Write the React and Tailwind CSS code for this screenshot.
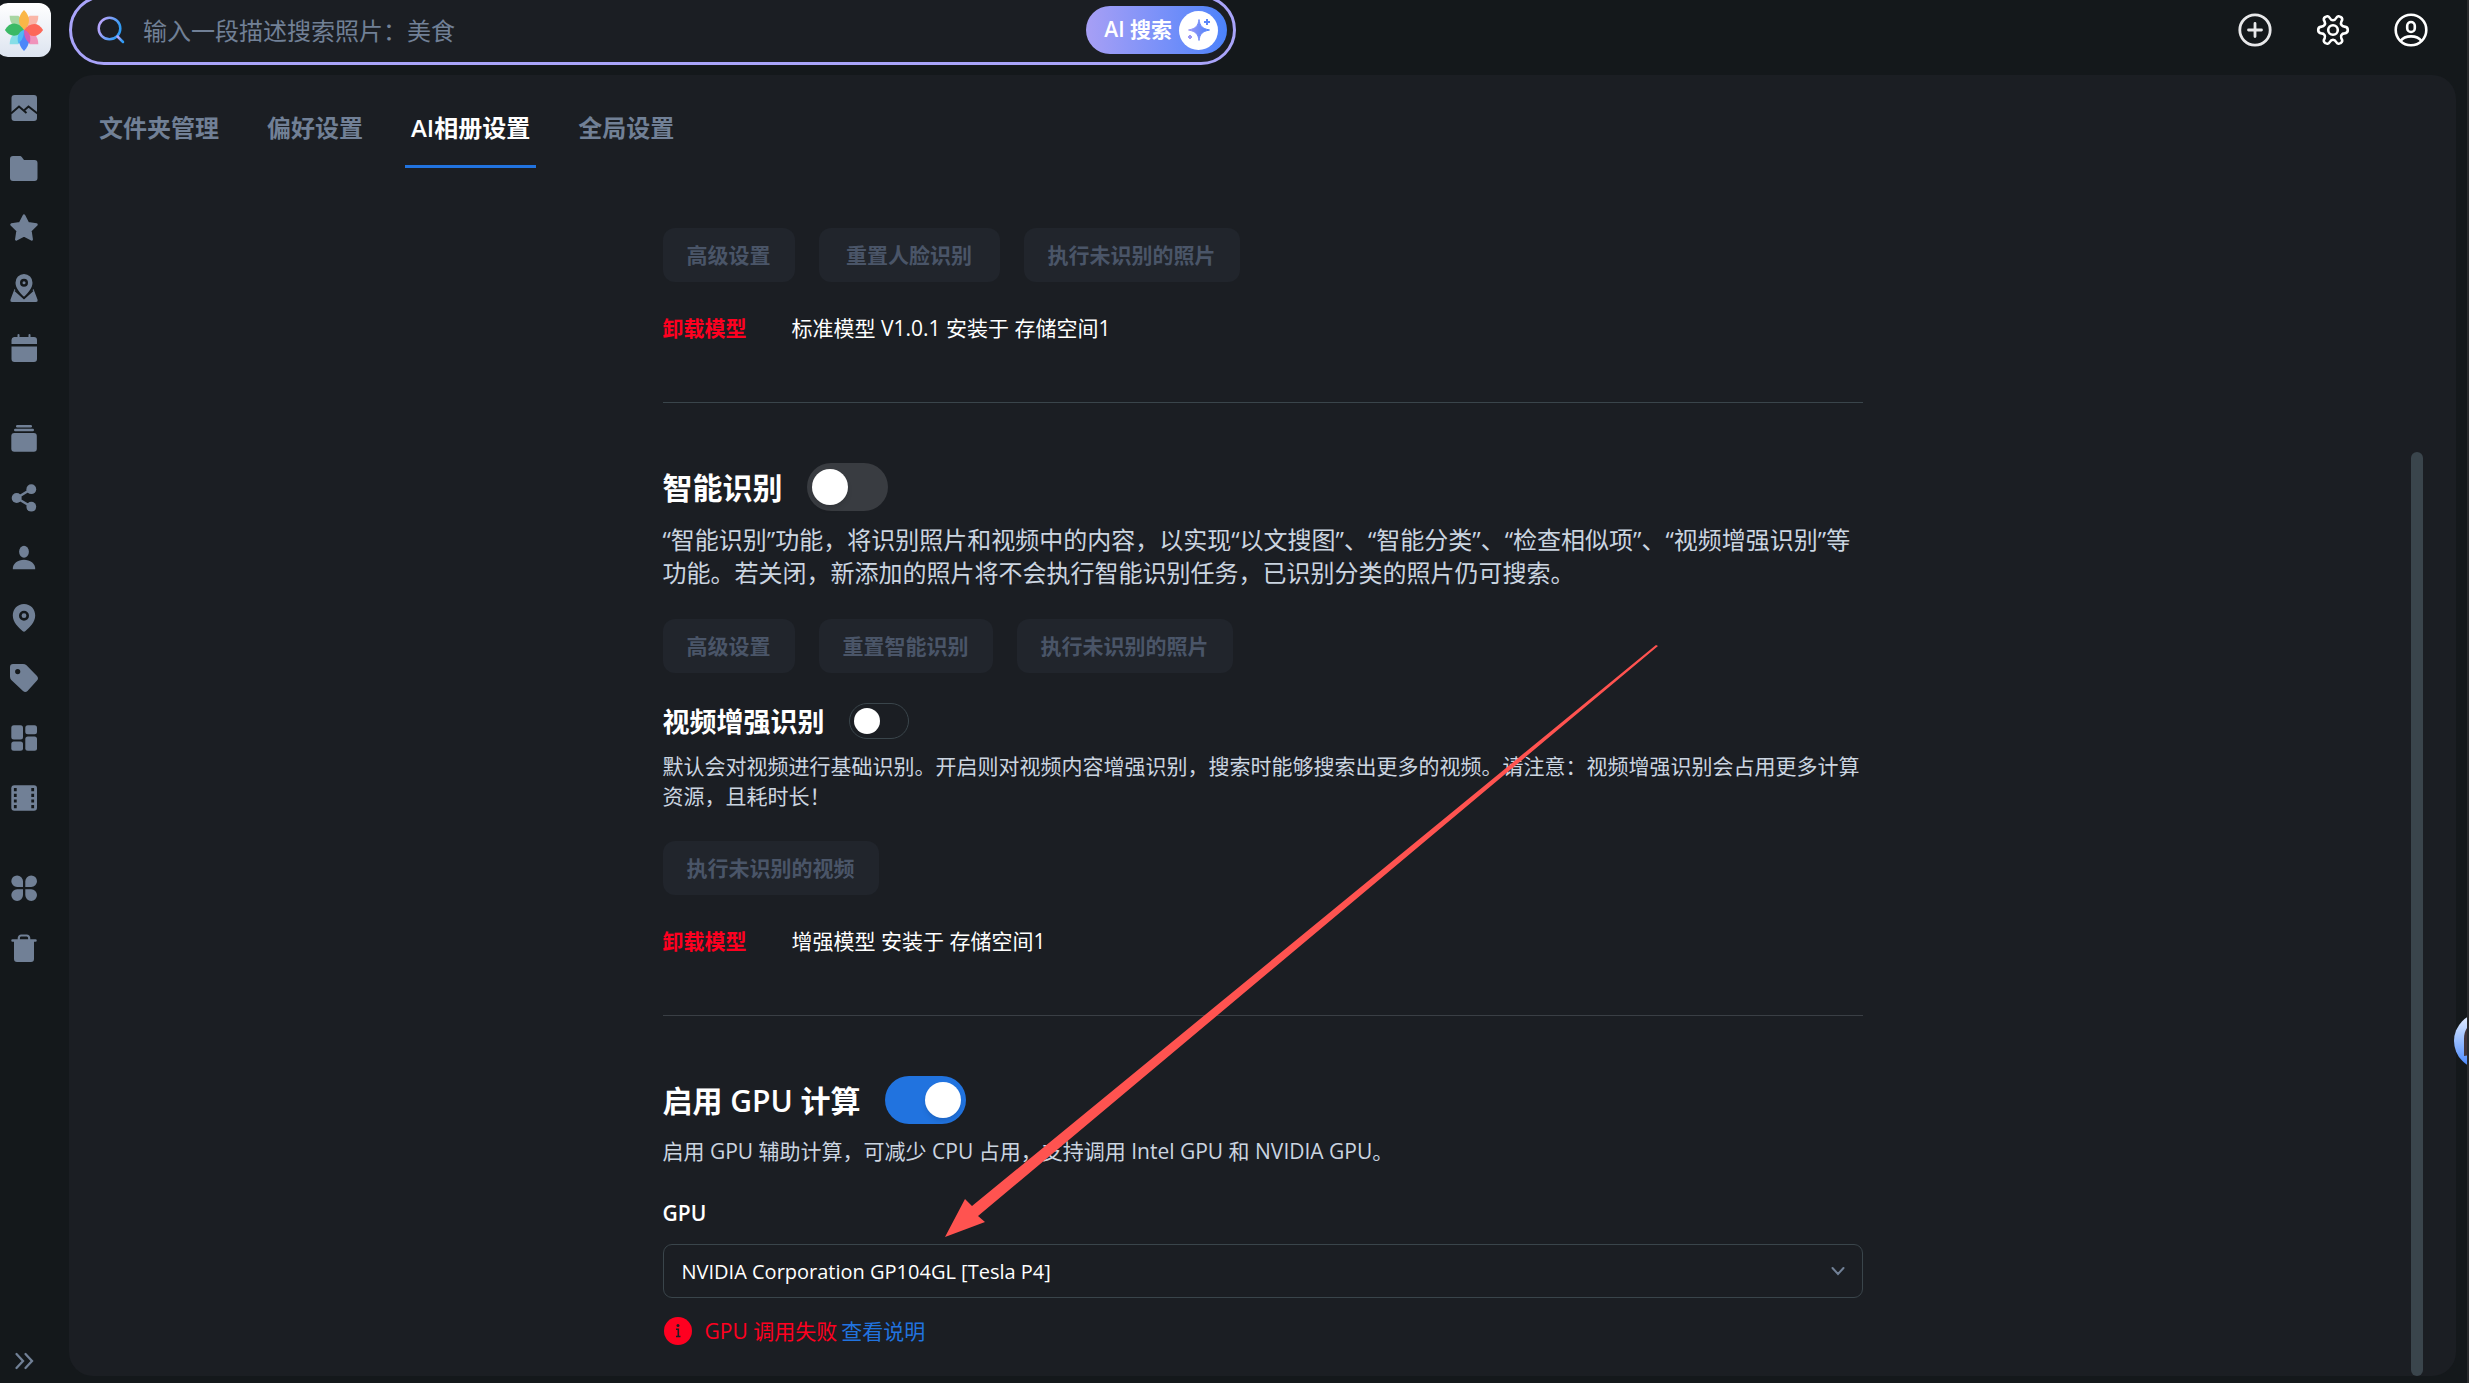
import React, { useState } from 'react'

const NAV_GROUPS = [
  ['照片', '文件夹', '收藏', '足迹', '时间线'],
  ['相册', '分享', '人物', '地点', '标签', '分类', '视频'],
  ['更多应用', '回收站']
]

const TABS = ['文件夹管理', '偏好设置', 'AI相册设置', '全局设置']

const NAV_ICONS = {
  照片: (
    <>
      <rect x="2.5" y="2" width="25.5" height="26" rx="3" fill="currentColor" />
      <path d="M2 20.5 10 13.5 17.5 20M15.5 17 19.5 13.5 28.5 20.5" fill="none" stroke="#14181b" strokeWidth="2" />
    </>
  ),
  文件夹: <path d="M1 6a3 3 0 0 1 3-3h6.5c1.5 0 2 .5 3 2l1.5 2h10.500a3 3 0 0 1 3 3V25a3 3 0 0 1-3 3H4a3 3 0 0 1-3-3Z" fill="currentColor" />,
  收藏: (
    <path
      d="M15 2.5 19 10.3 27.5 11.6 21.4 17.7 22.7 26.5 15 22.5 7.3 26.5 8.6 17.7 2.5 11.6 11 10.3Z"
      fill="currentColor"
      stroke="currentColor"
      strokeWidth="2.5"
      strokeLinejoin="round"
    />
  ),
  足迹: (
    <>
      <path
        fillRule="evenodd"
        d="M15 1a8.5 8.5 0 0 1 8.5 8.7c0 5-4 9.8-8.5 14-4.5-4.2-8.5-9-8.5-14A8.5 8.5 0 0 1 15 1Zm0 4.800a4 4 0 1 0 0 8 4 4 0 0 0 0-8Z"
        fill="currentColor"
      />
      <circle cx="15" cy="9.8" r="1.5" fill="currentColor" />
      <path d="M5.500 16 15 26 24.500 16 28.500 26.500Q29 29 27 29H3Q1 29 1.500 26.500Z" fill="currentColor" />
      <path d="M6 17.5 15 25.5 24 17.5" fill="none" stroke="#14181b" strokeWidth="1.5" />
    </>
  ),
  时间线: (
    <path
      d="M5 4h3.500V2a1 1 0 0 1 2 0v2h9V2a1 1 0 0 1 2 0v2H25a3 3 0 0 1 3 3v4H2.500V7A3 3 0 0 1 5 4ZM2.500 13.500H28V26a3 3 0 0 1-3 3H5.500a3 3 0 0 1-3-3Z"
      fill="currentColor"
    />
  ),
  相册: (
    <g fill="currentColor">
      <rect x="7" y="2" width="16" height="2.4" rx="1.2" />
      <rect x="5" y="5.700" width="20" height="2.6" rx="1.2" />
      <rect x="2.3" y="10" width="25.5" height="18.7" rx="3" />
    </g>
  ),
  分享: (
    <g fill="currentColor">
      <path d="M22.3 6 7.7 15 22.300 23.700" fill="none" stroke="currentColor" strokeWidth="2.4" />
      <circle cx="7.7" cy="15" r="5" />
      <circle cx="22.3" cy="6.2" r="4.900" />
      <circle cx="22.3" cy="23.7" r="4.900" />
    </g>
  ),
  人物: (
    <g fill="currentColor">
      <ellipse cx="15" cy="8.8" rx="4.9" ry="6" />
      <path d="M3.800 26.200C3.500 20.500 9 16.800 15 16.800s11.500 3.700 11.200 9.400Z" />
    </g>
  ),
  地点: (
    <>
      <path
        fillRule="evenodd"
        d="M15 1c6.500 0 11.200 5 11.200 11.500 0 7-5.700 11.500-9.700 15.500q-1.500 1.300-3 0c-4-4-9.700-8.500-9.700-15.500C3.800 6 8.500 1 15 1Zm0 6.700a5 5 0 1 0 0 10 5 5 0 0 0 0-10Z"
        fill="currentColor"
      />
      <circle cx="15" cy="12.7" r="2.4" fill="currentColor" />
    </>
  ),
  标签: (
    <path
      fillRule="evenodd"
      d="M1 4a3 3 0 0 1 3-3h10q2 0 3.500 1.300L28 13q2 2.300 0 4.500L18.500 28q-2.200 2-4.500 0L2.300 17Q1 15.500 1 13.500ZM8.700 6a2.600 2.600 0 1 0 0 5.200 2.600 2.600 0 0 0 0-5.200Z"
      fill="currentColor"
    />
  ),
  分类: (
    <g fill="currentColor">
      <rect x="2.3" y="2.2" width="11.7" height="14.2" rx="2.5" />
      <rect x="16.3" y="2.2" width="11.7" height="9" rx="2.5" />
      <rect x="2.3" y="18.6" width="11.7" height="9.2" rx="2.5" />
      <rect x="16.3" y="13.6" width="11.7" height="14.2" rx="2.5" />
    </g>
  ),
  视频: (
    <>
      <rect x="2.3" y="2.2" width="25.700" height="25.500" rx="3" fill="currentColor" />
      <path d="M6.300 5V25.500M23.700 5V25.500" stroke="#14181b" strokeWidth="2.800" strokeDasharray="3.2 2.500" />
    </>
  ),
  更多应用: (
    <g fill="currentColor">
      <path d="M8.100 2.400A5.900 5.900 0 0 1 14 8.300v5.700H8.100a5.800 5.800 0 0 1 0-11.600ZM22.200 2.400a5.800 5.800 0 0 1 0 11.600h-5.900V8.300a5.900 5.900 0 0 1 5.900-5.900Z" />
      <path d="M8.100 16.300H14V22a5.900 5.900 0 0 1-5.900 5.900 5.800 5.800 0 0 1 0-11.600ZM16.300 16.300h5.900a5.800 5.800 0 0 1 0 11.600A5.900 5.900 0 0 1 16.300 22Z" />
    </g>
  ),
  回收站: (
    <>
      <path d="M9.800 7V5a2.500 2.500 0 0 1 2.500-2.500h5.400A2.500 2.500 0 0 1 20.200 5v2" fill="none" stroke="currentColor" strokeWidth="2.2" />
      <path d="M3.500 6.200h23a1.200 1.200 0 0 1 0 2.500H25V26a3 3 0 0 1-3 3H8a3 3 0 0 1-3-3V8.700H3.500a1.200 1.200 0 0 1 0-2.500Z" fill="currentColor" />
    </>
  )
}

function Logo() {
  return (
    <div className="-ml-1 flex h-[54px] w-[55px] shrink-0 items-center justify-center rounded-xl bg-gradient-to-b from-white to-[#dde4f0]">
      <svg viewBox="0 0 44 44" className="h-[42px] w-[42px]">
        <g opacity="0.9">
          <path d="M7 7h9q6 4 6 15Q7 20 7 7Z" fill="#9fd39a" />
          <path d="M37 7h-9q-6 4-6 15 15-2 15-15Z" fill="#fbb0a0" />
          <path d="M37 37h-9q-6-4-6-15 15 2 15 15Z" fill="#f28ab5" />
          <path d="M7 37h9q6-4 6-15Q7 24 7 37Z" fill="#7cdde6" />
          <path d="M22 22c-7-6-7-14 0-21 7 7 7 15 0 21Z" fill="#fbb034" />
          <path d="M22 22c6-8 15-9 20 0-6 9-14 8-20 0Z" fill="#ff5a48" />
          <path d="M22 22c7 6 7 15 0 22-7-7-7-16 0-22Z" fill="#3d7dfa" />
          <path d="M22 22c-6 8-15 8-20 0 5-9 14-9 20 0Z" fill="#27b457" />
          <path d="M22 22c5 1 8 6 6 14-4-3-6-7-6-14Z" fill="#d14fae" />
          <path d="M22 22c-5 1-8 6-6 14 4-3 6-7 6-14Z" fill="#3fb3f5" />
        </g>
      </svg>
    </div>
  )
}

function SearchBar() {
  return (
    <form className="ml-[18px] flex h-[70px] w-[1167px] shrink-0 items-center rounded-full border-3 border-[#a9a4fa] bg-[#1b1e23] pr-[6px] pl-[25px]" onSubmit={e => e.preventDefault()}>
      <svg viewBox="0 0 28 28" className="h-7 w-7 shrink-0" fill="none" stroke="url(#searchStroke)" strokeWidth="2.5" strokeLinecap="round">
        <defs>
          <linearGradient id="searchStroke" x1="0" y1="0" x2="1" y2="0.4">
            <stop offset="0.2" stopColor="#b3a4fb" />
            <stop offset="1" stopColor="#2f9bf5" />
          </linearGradient>
        </defs>
        <circle cx="12.5" cy="12.5" r="10.8" />
        <path d="M20.5 20.5 26 26" />
      </svg>
      <input
        type="text"
        aria-label="搜索照片"
        placeholder="输入一段描述搜索照片：美食"
        className="ml-[18px] h-12 min-w-0 flex-1 bg-transparent text-2xl text-white outline-none placeholder:text-[#718096]"
      />
      <button
        type="submit"
        className="flex h-12 shrink-0 items-center gap-[7px] rounded-full bg-gradient-to-r from-[#a79ff5] to-[#4b82fb] pr-[9px] pl-[18px] text-[21px] font-semibold whitespace-nowrap text-white"
      >
        AI 搜索
        <span className="flex h-[39px] w-[39px] items-center justify-center rounded-full bg-white">
          <svg viewBox="0 0 24 24" className="h-6 w-6">
            <defs>
              <linearGradient id="spark" x1="0" y1="0" x2="1" y2="0">
                <stop offset="0" stopColor="#9d98f6" />
                <stop offset="1" stopColor="#4b82fb" />
              </linearGradient>
            </defs>
            <path d="M12 1.500c1 6.500 3 9 10.500 10.500C15 13.500 13 16 12 22.500 11 16 9 13.500 1.500 12 9 10.500 11 8 12 1.500Z" fill="url(#spark)" stroke="url(#spark)" />
            <path d="M20 1v6M17 4h6" stroke="#5b87fa" strokeWidth="2" />
            <path d="M3 17v4M1 19h4" stroke="#9d98f6" strokeWidth="2" />
          </svg>
        </span>
      </button>
    </form>
  )
}

function HeaderActions() {
  return (
    <div className="ml-auto flex items-center gap-[42px] pr-[38px] text-white">
      <button type="button" aria-label="添加">
        <svg viewBox="0 0 36 36" className="h-9 w-9" fill="none" stroke="#e8e8ea" strokeWidth="2.8" strokeLinecap="round">
          <circle cx="18" cy="18" r="15.200" />
          <path d="M18 11.500v13M11.500 18h13" />
        </svg>
      </button>
      <button type="button" aria-label="设置">
        <svg viewBox="0 0 36 36" className="h-9 w-9" fill="none" stroke="currentColor" strokeWidth="2.6" strokeLinejoin="round">
          <path d="M18 8.300Q20 8.300 21.200 6C22.500 3.500 24 4 25.700 5 27.500 6 27.800 7.500 26.300 9.800Q25.500 11.500 26.500 13T29.500 14.600C32 14.800 32.800 16 32.800 18S32 21.200 29.500 21.400Q27.500 21.500 26.500 23T26.300 26.200C27.800 28.500 27.500 30 25.700 31 24 32 22.500 32.500 21.200 30Q20 27.700 18 27.700T14.800 30C13.500 32.500 12 32 10.300 31 8.500 30 8.200 28.500 9.700 26.200Q10.500 24.500 9.500 23T6.500 21.400C4 21.200 3.200 20 3.200 18S4 14.800 6.500 14.600Q8.500 14.500 9.500 13T9.700 9.800C8.200 7.500 8.500 6 10.300 5 12 4 13.500 3.500 14.800 6Q16 8.300 18 8.300Z" />
          <circle cx="18" cy="18" r="4.8" />
        </svg>
      </button>
      <button type="button" aria-label="账户">
        <svg viewBox="0 0 36 36" className="h-9 w-9" fill="none" stroke="currentColor" strokeWidth="2.6">
          <circle cx="18" cy="18" r="15.3" />
          <rect x="14.2" y="10" width="7.6" height="10" rx="3.8" />
          <path d="M7.5 29C12 22.800 24 22.800 28.5 29" />
        </svg>
      </button>
    </div>
  )
}

function Sidebar() {
  return (
    <nav className="flex w-12 shrink-0 flex-col items-center gap-[30px] pt-[3px] pb-[7px] text-[#718096]">
      {NAV_GROUPS.map((group, i) => (
        <div key={i} className="flex flex-col">
          {group.map(name => (
            <a key={name} href="#" aria-label={name} className="flex h-15 w-12 items-center justify-center">
              <svg viewBox="0 0 30 30" className="h-[30px] w-[30px]">
                {NAV_ICONS[name]}
              </svg>
            </a>
          ))}
        </div>
      ))}
      <button type="button" aria-label="展开" className="mt-auto">
        <svg viewBox="0 0 30 30" className="h-[30px] w-[30px]" fill="none" stroke="currentColor" strokeWidth="2.3" strokeLinecap="round">
          <path d="M7.500 8 14 15l-6.500 7M16.500 8 23 15l-6.500 7" />
        </svg>
      </button>
    </nav>
  )
}

function Toggle({ id, checked, onChange }) {
  return (
    <input
      id={id}
      type="checkbox"
      role="switch"
      checked={checked}
      onChange={e => onChange(e.target.checked)}
      className="flex h-12 w-[81px] shrink-0 cursor-pointer appearance-none items-center rounded-full bg-[#393c41] px-[5px] before:h-9 before:w-9 before:rounded-full before:bg-white before:shadow-md checked:justify-end checked:bg-[#2173df]"
    />
  )
}

function ActionButton({ children, wide }) {
  return (
    <button
      type="button"
      disabled
      className={`h-[54px] rounded-xl bg-[#21252c] px-6 pt-0.5 text-[21px] font-semibold whitespace-nowrap text-[#4a5568] ${wide ? 'min-w-[181px]' : ''}`}
    >
      {children}
    </button>
  )
}

function ModelRow({ text }) {
  return (
    <div className="mt-[31px] mb-[59px] flex items-center gap-[45px] text-[21px] leading-[30px]">
      <button type="button" className="font-bold text-[#ff0020]">卸载模型</button>
      <span className="text-white">{text}</span>
    </div>
  )
}

// annotation arrow that points at the GPU drop-down
function Arrow() {
  return (
    <svg viewBox="0 0 714 592" className="pointer-events-none absolute top-[417px] left-[281px] h-[592px] w-[714px]">
      <path d="M714 1 34 571 41 577 1 592 21 554 28 561 712 0Z" fill="#ff5350" />
    </svg>
  )
}

function AiSettings() {
  const [smart, setSmart] = useState(false)
  const [video, setVideo] = useState(false)
  const [gpu, setGpu] = useState(true)

  return (
    <div className="relative mx-auto mt-15 w-full max-w-[1200px]">
      <div className="flex gap-6">
        <ActionButton>高级设置</ActionButton>
        <ActionButton wide>重置人脸识别</ActionButton>
        <ActionButton>执行未识别的照片</ActionButton>
      </div>
      <ModelRow text="标准模型 V1.0.1 安装于 存储空间1" />

      <hr className="mb-15 border-[#3a454b]" />

      <div className="flex items-center gap-6">
        <label htmlFor="smart" className="pt-0.5 text-3xl font-bold text-white">智能识别</label>
        <Toggle id="smart" checked={smart} onChange={setSmart} />
      </div>
      <p className="mt-3 text-2xl leading-[33px] text-[#cbd5e0]">
        “智能识别”功能，将识别照片和视频中的内容，以实现“以文搜图”、“智能分类”、“检查相似项”、“视频增强识别”等功能。若关闭，新添加的照片将不会执行智能识别任务，已识别分类的照片仍可搜索。
      </p>
      <div className="mt-[30px] flex gap-6">
        <ActionButton>高级设置</ActionButton>
        <ActionButton>重置智能识别</ActionButton>
        <ActionButton>执行未识别的照片</ActionButton>
      </div>

      <div className="mt-[30px] flex items-center gap-6">
        <label htmlFor="video" className="pt-0.5 text-[27px] leading-[34px] font-bold text-white">视频增强识别</label>
        <input
          id="video"
          type="checkbox"
          role="switch"
          checked={video}
          onChange={e => setVideo(e.target.checked)}
          className="flex h-9 w-15 shrink-0 cursor-pointer appearance-none items-center rounded-full border border-[#3a454b] px-1 before:h-[26px] before:w-[26px] before:rounded-full before:bg-white checked:justify-end checked:bg-[#2173df]"
        />
      </div>
      <p className="mt-3 text-[21px] leading-[30px] text-[#cbd5e0]">
        默认会对视频进行基础识别。开启则对视频内容增强识别，搜索时能够搜索出更多的视频。请注意：视频增强识别会占用更多计算资源，且耗时长！
      </p>
      <div className="mt-[30px] flex gap-6">
        <ActionButton>执行未识别的视频</ActionButton>
      </div>
      <ModelRow text="增强模型 安装于 存储空间1" />

      <hr className="mb-15 border-[#3a3f45]" />

      <div className="flex items-center gap-6">
        <label htmlFor="gpu-on" className="pt-0.5 text-3xl font-semibold text-white">启用 GPU 计算</label>
        <Toggle id="gpu-on" checked={gpu} onChange={setGpu} />
      </div>
      <p className="mt-3 text-[21px] leading-[30px] text-[#cbd5e0]">
        启用 GPU 辅助计算，可减少 CPU 占用，支持调用 Intel GPU 和 NVIDIA GPU。
      </p>
      <label htmlFor="gpu" className="mt-[30px] block pt-0.5 text-[21px] leading-[30px] font-semibold text-white">GPU</label>
      <div className="relative mt-4">
        <select id="gpu" className="h-[54px] w-full appearance-none rounded-[9px] border border-[#3a454b] bg-[#1b1e23] px-[18px] pt-0.5 text-xl text-white">
          <option>NVIDIA Corporation GP104GL [Tesla P4]</option>
        </select>
        <svg viewBox="0 0 18 18" className="pointer-events-none absolute inset-y-0 right-4 my-auto h-[18px] w-[18px]" fill="none" stroke="#718096" strokeWidth="2" strokeLinecap="round">
          <path d="M3.500 6 9 12l5.500-6" />
        </svg>
      </div>
      <div className="mt-[18px] flex items-center text-[21px] leading-[30px]">
        <svg viewBox="0 0 30 30" className="h-[30px] w-[30px]">
          <circle cx="15" cy="15" r="14" fill="#ff0020" />
          <circle cx="15" cy="9.5" r="1.5" fill="#1b1e23" />
          <path d="M13 13.300h2.300V20.500M13 20.500h4.500" fill="none" stroke="#1b1e23" strokeWidth="1.6" />
        </svg>
        <span className="ml-3 text-[#ff0020]">GPU 调用失败</span>
        <a href="#" className="ml-1 text-[#2173df]">查看说明</a>
      </div>
      <Arrow />
    </div>
  )
}

function Assistant() {
  return (
    <button type="button" aria-label="助手" className="absolute -right-[43px] bottom-[314px] h-14 w-14 overflow-hidden rounded-full bg-gradient-to-b from-[#eef3ff] to-[#3f80fb]">
      <svg viewBox="0 0 56 56" className="h-14 w-14">
        <path d="M10 43V26C10 14 18 8 28 8s18 6 18 18v17q-18-4-36 0Z" fill="#43353a" />
      </svg>
    </button>
  )
}

export default function App() {
  const [tab, setTab] = useState('AI相册设置')

  return (
    <div className="relative flex h-screen flex-col overflow-hidden border-r-2 border-[#2a2b2d] bg-[#14181b] font-['Open_Sans','Noto_Sans_CJK_SC',sans-serif]">
      <header className="flex h-15 shrink-0 items-center">
        <Logo />
        <SearchBar />
        <HeaderActions />
      </header>

      <div className="mt-[15px] flex min-h-0 flex-1">
        <Sidebar />
        <main className="relative mr-[11px] mb-[7px] ml-[21px] min-w-0 flex-1 overflow-hidden rounded-3xl bg-[#1b1e23]">
          <div className="flex gap-9 px-6 pt-[15px]">
            {TABS.map(name => (
              <button
                key={name}
                type="button"
                onClick={() => setTab(name)}
                className={`h-[78px] border-b-3 px-[6px] text-2xl font-semibold ${tab === name ? 'border-[#2173df] text-white' : 'border-transparent text-[#718096]'}`}
              >
                {name}
              </button>
            ))}
          </div>
          <AiSettings />
          <div className="absolute top-[377px] right-[33px] bottom-0 w-3 rounded-full bg-[#3a454c]" />
        </main>
      </div>
      <Assistant />
    </div>
  )
}
